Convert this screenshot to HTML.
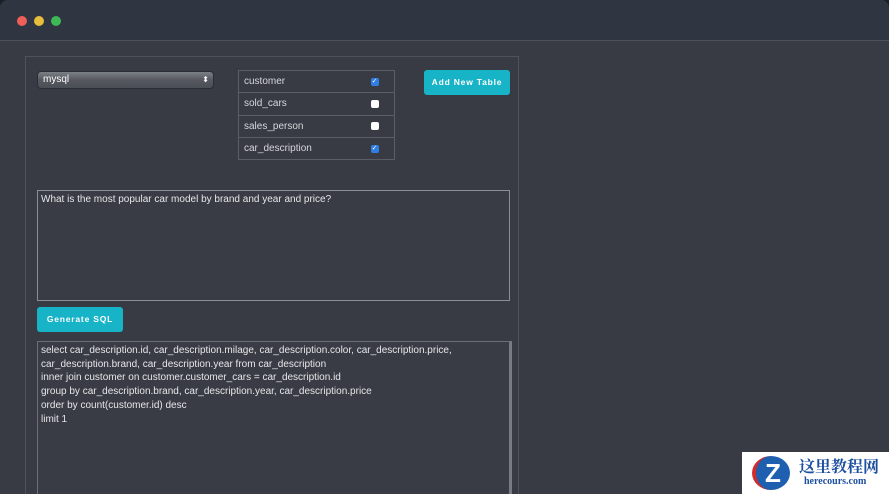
<!DOCTYPE html>
<html><head><style>
*{margin:0;padding:0;box-sizing:border-box}
body{width:889px;height:494px;overflow:hidden;background:#1c1f25;font-family:"Liberation Sans",sans-serif;position:relative}
.win{position:absolute;left:0;top:0;width:889px;height:494px;background:#383b44;border-radius:8px 8px 0 0;overflow:hidden}
.tb{position:absolute;left:0;top:0;width:889px;height:41px;background:#2f3541;border-bottom:1px solid #4d525c}
.dot{position:absolute;top:16px;width:10px;height:10px;border-radius:50%}
.panel{position:absolute;left:25px;top:56px;width:494px;height:450px;border:1px solid #4e525a}
.sel{position:absolute;left:37px;top:71px;width:177px;height:18px;border-radius:4px;background:linear-gradient(#7b7f86,#55595f 50%,#4a4e55);border:1px solid #2a2d33;color:#fff;font-size:10px;line-height:16px;padding-left:5px}
.sel span{position:absolute;right:4px;top:0;font-size:8px}
table{position:absolute;left:238px;top:70px;border-collapse:collapse;width:157px;border:1px solid #5a5e66}
td{border-top:1px solid #5a5e66;border-bottom:1px solid #5a5e66;height:22.3px;color:#d5d7da;font-size:10px;padding-left:5px}
td.c{width:48px;padding:0}
.cb{width:8px;height:8px;background:#fff;border-radius:2px;margin-left:24px}
.cb.on{background:#2f7ee6;color:#fff;font-size:7px;line-height:8px;text-align:center}
.btn{position:absolute;background:#17b3c7;color:#fff;font-weight:bold;font-size:8.5px;letter-spacing:0.8px;border-radius:3px;text-align:center}
.ta{position:absolute;border:1px solid #8a8e95;color:#e6e7e9;font-size:10px;padding:2px 3px;line-height:13.7px;background:#393c45}
</style></head><body>
<div class="win">
<div class="tb">
<div class="dot" style="left:17px;background:#ed5f58"></div>
<div class="dot" style="left:34px;background:#e6be3b"></div>
<div class="dot" style="left:51px;background:#3fb856"></div>
</div>
<div class="panel"></div>
<div class="sel">mysql<span>⬍</span></div>
<table>
<tr><td>customer</td><td class="c"><div class="cb on">✓</div></td></tr>
<tr><td>sold_cars</td><td class="c"><div class="cb"></div></td></tr>
<tr><td>sales_person</td><td class="c"><div class="cb"></div></td></tr>
<tr><td>car_description</td><td class="c"><div class="cb on">✓</div></td></tr>
</table>
<div class="btn" style="left:424px;top:70px;width:86px;height:25px;line-height:25px">Add New Table</div>
<div class="ta" style="left:37px;top:190px;width:473px;height:111px">What is the most popular car model by brand and year and price?</div>
<div class="btn" style="left:37px;top:307px;width:86px;height:25px;line-height:25px">Generate SQL</div>
<div class="ta" style="left:37px;top:341px;width:475px;height:160px;border-color:#6a6e75;border-right:3px solid #777b82">select car_description.id, car_description.milage, car_description.color, car_description.price,<br>car_description.brand, car_description.year from car_description<br>inner join customer on customer.customer_cars = car_description.id<br>group by car_description.brand, car_description.year, car_description.price<br>order by count(customer.id) desc<br>limit 1</div>
<div style="position:absolute;left:742px;top:452px;width:147px;height:42px;background:#fff">
<div style="position:absolute;left:10px;top:4px;width:38px;height:34px;border-radius:50%;background:#1f5fb0;color:#fff;font-weight:bold;font-size:26px;text-align:center;line-height:34px;border-left:4px solid #d32b2b">Z</div>
<div style="position:absolute;left:57px;top:2px;color:#1d4fa0;font-weight:bold;font-size:16px;font-family:'Noto Serif CJK SC',serif">这里教程网</div>
<div style="position:absolute;left:62px;top:24px;color:#1d4fa0;font-weight:bold;font-size:10px;font-family:'Liberation Serif',serif">herecours.com</div>
</div>
</div>
</body></html>
